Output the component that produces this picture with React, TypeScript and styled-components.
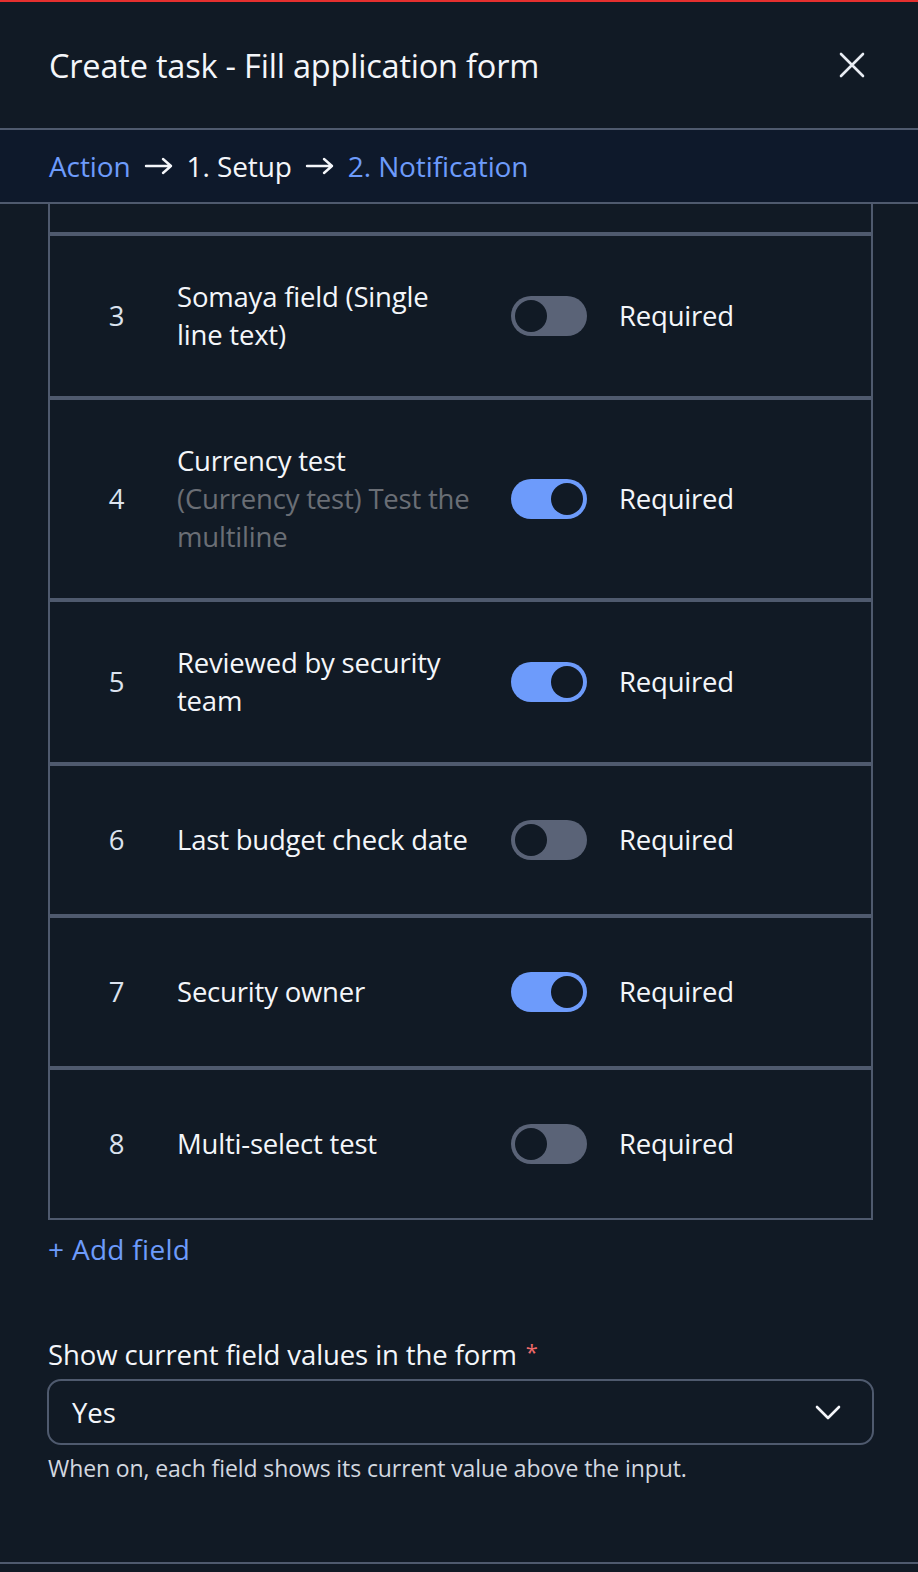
import React from "react"
import styled, { createGlobalStyle } from "styled-components"

const GlobalStyle = createGlobalStyle`
  html, body {
    margin: 0;
    padding: 0;
    background: #111a25;
  }
  body {
    font-family: "Open Sans", "Noto Sans", sans-serif;
    color: #f4f6fa;
  }
`

const Page = styled.div`
  width: 918px;
  height: 1572px;
  display: flex;
  flex-direction: column;
  background: #111a25;
  border-top: 2px solid #e5302f;
  box-sizing: border-box;
  overflow: hidden;
`

const Header = styled.header`
  height: 126px;
  flex: none;
  display: flex;
  align-items: center;
  justify-content: space-between;
  padding: 0 48px 0 49px;
  border-bottom: 2px solid #4f5a6e;

  h1 {
    margin: 0;
    font-size: 32.5px;
    font-weight: 500;
    letter-spacing: -0.2px;
  }
`

const CloseButton = styled.button`
  width: 36px;
  height: 36px;
  padding: 0;
  border: 0;
  background: none;
  color: #e8ecf3;
  display: flex;
  align-items: center;
  justify-content: center;
`

const Crumbs = styled.nav`
  height: 72px;
  flex: none;
  display: flex;
  align-items: center;
  gap: 13px;
  padding: 0 49px;
  background: #0e192b;
  border-bottom: 2px solid #4f5a6e;
  font-size: 28px;
  letter-spacing: -0.1px;
`

const Crumb = styled.span<{ $active?: boolean }>`
  color: ${props => (props.$active ? "#f4f6fa" : "#6d9bfb")};
`

const Body = styled.div`
  flex: 1;
  padding: 0 45px 0 48px;
  display: flex;
  flex-direction: column;
`

const FieldTable = styled.div`
  display: flex;
  flex-direction: column;
`

const PartialRow = styled.div`
  height: 28px;
  border: 2px solid #4f5a6e;
  border-top: 0;
`

const Row = styled.div`
  display: grid;
  grid-template-columns: 127px 334px 76px auto;
  align-items: center;
  padding: 42px 0;
  border: 2px solid #4f5a6e;
  font-size: 27.5px;
  line-height: 38px;
  letter-spacing: -0.2px;
`

const Num = styled.div`
  text-align: center;
  padding-left: 6px;
  color: #dbe2ee;
  min-height: 64px;
  display: flex;
  align-items: center;
  justify-content: center;
`

const Label = styled.div`
  color: #f4f6fa;
  div {
    white-space: nowrap;
  }
`

const Hint = styled.div`
  color: #6a6e75;
`

const Track = styled.div<{ $on: boolean }>`
  width: 76px;
  height: 40px;
  border-radius: 20px;
  box-sizing: border-box;
  padding: 4px;
  display: flex;
  justify-content: ${props => (props.$on ? "flex-end" : "flex-start")};
  background: ${props => (props.$on ? "#6d9bfb" : "#5a6377")};
`

const Knob = styled.div`
  width: 32px;
  height: 32px;
  border-radius: 50%;
  background: #111a25;
`

const Required = styled.span`
  padding-left: 32px;
  color: #f4f6fa;
`

const AddField = styled.button`
  align-self: flex-start;
  margin-top: 10px;
  padding: 0;
  border: 0;
  background: none;
  font: inherit;
  font-size: 28px;
  line-height: 38px;
  letter-spacing: 0.3px;
  color: #6d9bfb;
`

const FormLabel = styled.label`
  display: block;
  margin-top: 64px;
  font-size: 27.5px;
  line-height: 38px;
  color: #f4f6fa;
  letter-spacing: -0.1px;

  span {
    color: #f06a6a;
    font-size: 22px;
    vertical-align: 5px;
    margin-left: 9px;
  }
`

const Select = styled.div`
  margin: 5px -1px 0;
  height: 66px;
  box-sizing: border-box;
  border: 2px solid #4f5a6e;
  border-radius: 14px;
  display: flex;
  align-items: center;
  justify-content: space-between;
  padding: 0 30px 0 23px;
  font-size: 27.5px;
  color: #f4f6fa;
`

const Help = styled.p`
  margin: 8px 0 0;
  font-size: 23px;
  line-height: 30px;
  color: #d3d8e0;
  letter-spacing: -0.1px;
`

const Footer = styled.div`
  height: 8px;
  flex: none;
  border-top: 2px solid #4f5a6e;
`

type Field = {
  n: number
  lines: string[]
  hint?: string[]
  on: boolean
}

const fields: Field[] = [
  { n: 3, lines: ["Somaya field (Single", "line text)"], on: false },
  { n: 4, lines: ["Currency test"], hint: ["(Currency test) Test the", "multiline"], on: true },
  { n: 5, lines: ["Reviewed by security", "team"], on: true },
  { n: 6, lines: ["Last budget check date"], on: false },
  { n: 7, lines: ["Security owner"], on: true },
  { n: 8, lines: ["Multi-select test"], on: false },
]

const Arrow = () => (
  <svg width="30" height="20" viewBox="0 0 30 20" fill="none" stroke="#f4f6fa" strokeWidth="2.4" strokeLinecap="round" strokeLinejoin="round">
    <path d="M2 10h25M19 3l8 7-8 7" />
  </svg>
)

const App = () => (
  <Page>
    <GlobalStyle />
    <Header>
      <h1>Create task - Fill application form</h1>
      <CloseButton aria-label="Close">
        <svg width="26" height="26" viewBox="0 0 26 26" stroke="currentColor" strokeWidth="2.6" strokeLinecap="round">
          <path d="M2 2l22 22M24 2L2 24" />
        </svg>
      </CloseButton>
    </Header>
    <Crumbs>
      <Crumb>Action</Crumb>
      <Arrow />
      <Crumb $active>1. Setup</Crumb>
      <Arrow />
      <Crumb>2. Notification</Crumb>
    </Crumbs>
    <Body>
      <FieldTable>
        <PartialRow />
        {fields.map(f => (
          <Row key={f.n}>
            <Num>{f.n}</Num>
            <Label>
              {f.lines.map(l => (
                <div key={l}>{l}</div>
              ))}
              {f.hint && (
                <Hint>
                  {f.hint.map(l => (
                    <div key={l}>{l}</div>
                  ))}
                </Hint>
              )}
            </Label>
            <Track $on={f.on}>
              <Knob />
            </Track>
            <Required>Required</Required>
          </Row>
        ))}
      </FieldTable>
      <AddField>+ Add field</AddField>
      <FormLabel>
        Show current field values in the form<span>*</span>
      </FormLabel>
      <Select>
        Yes
        <svg width="28" height="16" viewBox="0 0 28 16" fill="none" stroke="#f4f6fa" strokeWidth="2.6" strokeLinecap="round" strokeLinejoin="round">
          <path d="M3 3l11 11L25 3" />
        </svg>
      </Select>
      <Help>When on, each field shows its current value above the input.</Help>
    </Body>
    <Footer />
  </Page>
)

export default App
